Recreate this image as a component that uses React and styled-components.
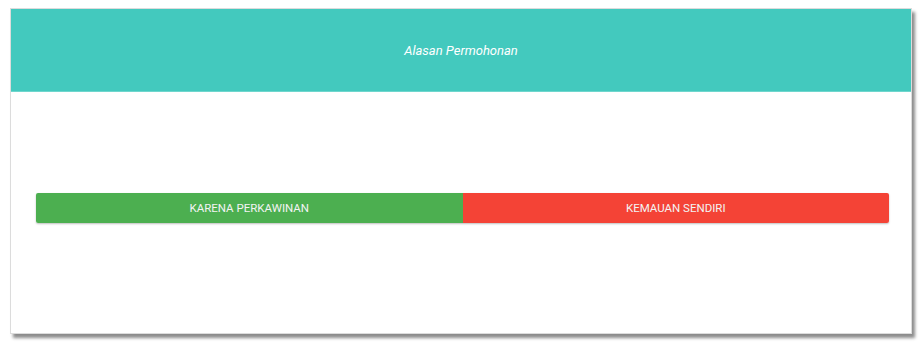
import styled, { createGlobalStyle } from 'styled-components';

const Global = createGlobalStyle`
  body {
    margin: 0;
    background: #ffffff;
    font-family: Roboto, "Liberation Sans", sans-serif;
  }
`;

const Page = styled.div`
  padding: 8px 0 9px 10px;
`;

const Card = styled.section`
  width: 900px;
  height: 324px;
  border: 1px solid #dcdcdc;
  background: #fff;
  box-shadow: 3px 4px 3px rgba(0, 0, 0, 0.45);
  display: flex;
  flex-direction: column;
`;

const Header = styled.header`
  height: 82px;
  background: #43c9be;
  display: flex;
  align-items: center;
  justify-content: center;
  border-bottom: 1px solid #6fd6cd;
`;

const Title = styled.h3`
  margin: 0;
  color: #fff;
  font-style: italic;
  font-weight: 400;
  font-size: 13px;
`;

const Body = styled.div`
  flex: 1;
  padding: 101px 22px 0 25px;
`;

const ButtonRow = styled.div`
  display: flex;
  border-radius: 2px;
  overflow: hidden;
  box-shadow: 0 1px 2px rgba(0, 0, 0, 0.25);
`;

const Choice = styled.button`
  flex: 1;
  height: 30px;
  border: none;
  padding: 0;
  cursor: pointer;
  background: ${p => p.color};
  color: #f3f3f3;
  font-family: Roboto, "Liberation Sans", sans-serif;
  font-size: 11.5px;
  text-transform: uppercase;
`;

function App() {
  return (
    <>
      <Global />
      <Page>
        <Card>
          <Header>
            <Title>Alasan Permohonan</Title>
          </Header>
          <Body>
            <ButtonRow>
              <Choice color="#4caf50">Karena Perkawinan</Choice>
              <Choice color="#f44336">Kemauan Sendiri</Choice>
            </ButtonRow>
          </Body>
        </Card>
      </Page>
    </>
  );
}

export default App;
